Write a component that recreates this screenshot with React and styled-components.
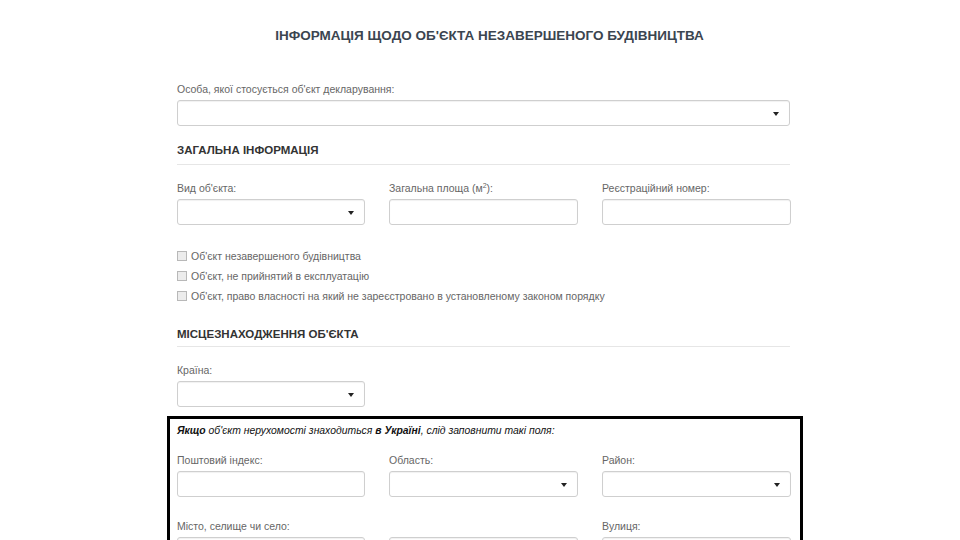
import React from 'react';
import styled, { createGlobalStyle } from 'styled-components';

const GlobalStyle = createGlobalStyle`
    body {
        margin: 0;
        background: #ffffff;
        font-family: "Liberation Sans", Arial, sans-serif;
    }
`;

const Page = styled.div`
    width: 960px;
    height: 540px;
    overflow: hidden;
    padding-top: 28px;
    box-sizing: border-box;
`;

const Container = styled.div`
    width: 613px;
    margin-left: 177px;
`;

const Title = styled.h1`
    margin: 0 0 38px 12px;
    font-size: 13.5px;
    line-height: 16px;
    font-weight: bold;
    text-align: center;
    color: #3b4550;
`;

const Label = styled.div`
    font-size: 10.5px;
    line-height: 14px;
    height: 14px;
    color: #666;
    margin-bottom: 4px;
    white-space: nowrap;

    sup {
        font-size: 7px;
        line-height: 0;
    }
`;

const Field = styled.div`
    position: relative;
    height: 26px;
    box-sizing: border-box;
    border: 1px solid #cfcfcf;
    border-radius: 3px;
    background: #fff;
    box-shadow: inset 0 1px 1px rgba(0, 0, 0, 0.06);
`;

const Arrow = styled.span`
    position: absolute;
    right: 10px;
    top: 11px;
    width: 0;
    height: 0;
    border-left: 3px solid transparent;
    border-right: 3px solid transparent;
    border-top: 4px solid #222;
`;

const Section = styled.h2`
    margin: ${p => p.$top}px 0 0;
    padding-bottom: ${p => p.$pad}px;
    border-bottom: 1px solid #e6e6e6;
    font-size: 11.5px;
    line-height: 14px;
    font-weight: bold;
    color: #333;
`;

const Row = styled.div`
    display: grid;
    grid-template-columns: 188px 189px 189px;
    column-gap: 24px;
    margin-top: ${p => p.$top}px;
`;

const Checks = styled.div`
    margin-top: 21px;
`;

const CheckRow = styled.div`
    display: flex;
    align-items: center;
    height: 20px;
    font-size: 10.5px;
    color: #666;
`;

const Box = styled.span`
    width: 8px;
    height: 8px;
    border: 1px solid #b8b8b8;
    background: #ececec;
    margin-right: 4px;
    flex: none;
`;

const Notice = styled.div`
    margin: 9px -13px 0 -10px;
    padding: 5px 10px 20px 7px;
    border: 3px solid #000;
    border-bottom: none;
    height: 200px;
`;

const NoticeText = styled.div`
    font-size: 10.4px;
    line-height: 14px;
    font-style: italic;
    color: #111;

    b {
        font-weight: bold;
    }
`;

const Input = ({ select }) => (
    <Field>{select && <Arrow />}</Field>
);

const Cell = ({ label, select }) => (
    <div>
        <Label>{label || '\u00a0'}</Label>
        <Input select={select} />
    </div>
);

const App = () => {
    return <Page>
        <GlobalStyle />
        <Container>
            <Title>ІНФОРМАЦІЯ ЩОДО ОБ'ЄКТА НЕЗАВЕРШЕНОГО БУДІВНИЦТВА</Title>

            <Label>Особа, якої стосується об'єкт декларування:</Label>
            <Input select />

            <Section $top={17} $pad={7}>ЗАГАЛЬНА ІНФОРМАЦІЯ</Section>

            <Row $top={16}>
                <Cell label="Вид об'єкта:" select />
                <Cell label={<>Загальна площа (м<sup>2</sup>):</>} />
                <Cell label="Реєстраційний номер:" />
            </Row>

            <Checks>
                <CheckRow><Box />Об'єкт незавершеного будівництва</CheckRow>
                <CheckRow><Box />Об'єкт, не прийнятий в експлуатацію</CheckRow>
                <CheckRow><Box />Об'єкт, право власності на який не зареєстровано в установленому законом порядку</CheckRow>
            </Checks>

            <Section $top={21} $pad={5}>МІСЦЕЗНАХОДЖЕННЯ ОБ'ЄКТА</Section>

            <Row $top={16}>
                <Cell label="Країна:" select />
            </Row>

            <Notice>
                <NoticeText>
                    <b>Якщо</b> об'єкт нерухомості знаходиться <b>в Україні</b>, слід заповнити такі поля:
                </NoticeText>
                <Row $top={15}>
                    <Cell label="Поштовий індекс:" />
                    <Cell label="Область:" select />
                    <Cell label="Район:" select />
                </Row>
                <Row $top={22}>
                    <Cell label="Місто, селище чи село:" />
                    <Cell />
                    <Cell label="Вулиця:" />
                </Row>
            </Notice>
        </Container>
    </Page>
};

export default App;
